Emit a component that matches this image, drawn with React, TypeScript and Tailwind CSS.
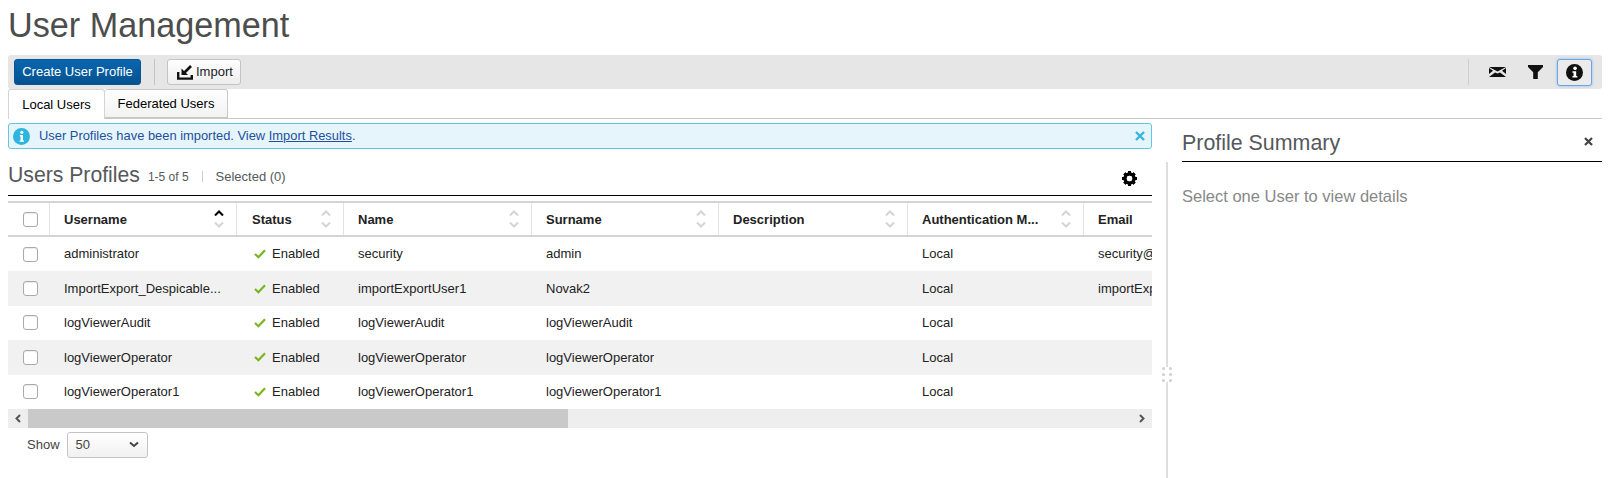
const columns = [
  { label: "Username", width: "w-[187px]", pad: "pl-[14px]", active: true },
  { label: "Status", width: "w-[107px]", pad: "pl-[15px]" },
  { label: "Name", width: "w-[188px]", pad: "pl-[14px]" },
  { label: "Surname", width: "w-[187px]", pad: "pl-[14px]" },
  { label: "Description", width: "w-[189px]", pad: "pl-[14px]" },
  { label: "Authentication M...", width: "w-[176px]", pad: "pl-[14px]" },
  { label: "Email", width: "w-[120px]", pad: "pl-[14px]", noSort: true },
];

const rows = [
  { username: "administrator", name: "security", surname: "admin", email: "security@" },
  { username: "ImportExport_Despicable...", name: "importExportUser1", surname: "Novak2", email: "importExport" },
  { username: "logViewerAudit", name: "logViewerAudit", surname: "logViewerAudit", email: "" },
  { username: "logViewerOperator", name: "logViewerOperator", surname: "logViewerOperator", email: "" },
  { username: "logViewerOperator1", name: "logViewerOperator1", surname: "logViewerOperator1", email: "" },
];

const gearTeeth = [0, 45, 90, 135];

const Checkbox = () => (
  <span className="block w-[15px] h-[15px] ml-[15px] rounded-[3px] border border-[#aaa] bg-white shadow-[inset_0_1px_1px_rgba(0,0,0,0.08)]"></span>
);

const Chevron = ({ up, className }: { up?: boolean; className: string }) => (
  <svg width="10" height="6" viewBox="0 0 10 6" className={className}>
    <path d={up ? "M1 5.5 L5 1.5 L9 5.5" : "M1 0.5 L5 4.5 L9 0.5"} fill="none" stroke="currentColor" strokeWidth="2" />
  </svg>
);

const SortIcon = ({ active }: { active?: boolean }) => (
  <span className="flex flex-col gap-[6px]">
    <Chevron up className={active ? "text-black" : "text-[#d4d4d4]"} />
    <Chevron className="text-[#d4d4d4]" />
  </span>
);

export default function App() {
  return (
    <div className="w-[1609px] h-[478px] overflow-hidden bg-white font-['Liberation_Sans',Arial,sans-serif] text-[13px] text-[#222]">
      <h1 className="h-[55px] pl-2 pt-[3px] text-[34.2px] leading-[44px] text-[#4d4d4d]">User Management</h1>

      <div className="mx-2 h-[34px] w-[1594px] flex items-center bg-[#e6e6e6] rounded-[3px] pl-[6px] pr-[10px]">
        <button className="w-[127px] h-[26px] rounded-[3px] border border-[#0a5493] bg-gradient-to-b from-[#0a66b1] to-[#04528f] text-white text-[13px]">Create User Profile</button>
        <span className="w-[1px] h-[26px] bg-[#c4c4c4] ml-[13px] mr-[12px]"></span>
        <button className="w-[74px] h-[26px] rounded-[3px] border border-[#c4c4c4] bg-gradient-to-b from-white to-[#ededed] flex items-center gap-[3px] pl-[9px] text-[13px]">
          <svg width="16" height="16" viewBox="0 0 16 16">
            <path d="M1.2 8 V14.6 H14.8 V11" fill="none" stroke="#111" strokeWidth="2.4" />
            <path d="M14 2 L7 9" fill="none" stroke="#111" strokeWidth="2.6" />
            <path d="M4.5 4.5 V11 H11 Z" fill="#111" />
          </svg>
          Import
        </button>
        <span className="ml-auto w-[1px] h-[26px] bg-[#cfcfcf] mr-[20px]"></span>
        <svg width="17" height="10" viewBox="0 0 17 10" className="mr-[22px]">
          <path d="M0 0 H17 L8.5 4.6 Z M0 10 L6 5.4 L8.5 6.4 L11 5.4 L17 10 Z M0 1 L4 3.8 L0 7 Z M17 1 L13 3.8 L17 7 Z" fill="#111" />
        </svg>
        <svg width="15" height="14" viewBox="0 0 15 14" className="mr-[14px]">
          <path d="M0 0 H15 V2 L9.8 7.2 V14 H5.2 V7.2 L0 2 Z" fill="#111" />
        </svg>
        <span className="w-[35px] h-[27px] rounded-[3px] border border-[#6ea3e6] shadow-[0_0_3px_#8ab8f0] bg-[#ebebeb] flex items-center justify-center">
          <svg width="17" height="17" viewBox="0 0 18 18">
            <circle cx="9" cy="9" r="9" fill="#111" />
            <circle cx="9.6" cy="4.6" r="1.9" fill="#fff" />
            <path d="M6.8 7.6 H10.8 V12.8 H12 V14.4 H6.8 V12.8 H8 V9.2 H6.8 Z" fill="#fff" />
          </svg>
        </span>
      </div>

      <div className="mx-2 w-[1594px] h-[30px] flex items-end border-b border-[#c8c8c8]">
        <span className="w-[97px] h-[30px] -mb-px rounded-t-[3px] border border-b-0 border-[#d4d4d4] bg-white flex items-center justify-center text-[13px] text-black">Local Users</span>
        <span className="w-[123px] h-[29px] rounded-t-[3px] border border-l-0 border-[#c8c8c8] bg-gradient-to-b from-white to-[#f2f2f2] flex items-center justify-center text-[13px] text-black">Federated Users</span>
      </div>

      <div className="flex">
        <div className="w-[1144px] ml-2 shrink-0">
          <div className="mt-[4px] h-[26px] rounded-[3px] border border-[#63c6e4] bg-[#e5f5fb] flex items-center pl-[4px] pr-[6px] text-[12.9px] text-[#1f4f9f]">
            <svg width="17" height="17" viewBox="0 0 17 17" className="mr-[9px]">
              <circle cx="8.5" cy="8.5" r="8.5" fill="#2db4e0" />
              <circle cx="8.8" cy="4.3" r="1.6" fill="#fff" />
              <path d="M6.8 7 H10 V12.4 H11 V13.8 H6.6 V12.4 H7.6 V8.4 H6.8 Z" fill="#fff" />
            </svg>
            <span>User Profiles have been imported. View <span className="underline">Import Results</span>.</span>
            <svg width="10" height="10" viewBox="0 0 10 10" className="ml-auto">
              <path d="M1 1 L9 9 M9 1 L1 9" stroke="#35b5de" strokeWidth="2.4" />
            </svg>
          </div>

          <div className="h-[47px] flex items-center border-b border-black mb-[5px] pt-[6px]">
            <span className="text-[21.2px] text-[#55585c]">Users Profiles</span>
            <span className="ml-2 mt-[3px] text-[12px] text-[#55585c]">1-5 of 5</span>
            <span className="ml-[13px] mr-[13px] mt-[3px] w-[1px] h-[11px] bg-[#ccc]"></span>
            <span className="mt-[3px] text-[13px] text-[#55585c]">Selected (0)</span>
            <svg width="15" height="15" viewBox="0 0 24 24" className="ml-auto mr-[15px] mt-[6px]">
              <circle cx="12" cy="12" r="7.4" fill="none" stroke="#000" strokeWidth="5" />
              {gearTeeth.map((angle) => (
                <rect key={angle} x="9.4" y="0" width="5.2" height="24" fill="#000" transform={`rotate(${angle} 12 12)`} mask="url(#gear-hole)" />
              ))}
              <mask id="gear-hole">
                <rect width="24" height="24" fill="#fff" />
                <circle cx="12" cy="12" r="5" fill="#000" />
              </mask>
            </svg>
          </div>

          <div className="overflow-hidden">
            <div className="flex w-[1280px] h-[36px] border-t-2 border-b-2 border-[#d4d4d4]">
              <div className="w-[42px] flex items-center border-r border-[#e3e3e3]">
                <Checkbox />
              </div>
              {columns.map((col) => (
                <div key={col.label} className={`${col.width} ${col.pad} flex items-center justify-between pr-[12px] border-r border-[#e3e3e3] font-bold text-[13px] text-[#222]`}>
                  <span className="mt-[1px]">{col.label}</span>
                  {!col.noSort && <SortIcon active={col.active} />}
                </div>
              ))}
            </div>
            {rows.map((row, i) => (
              <div key={row.username} className={`flex w-[1280px] h-[34.4px] items-center ${i % 2 === 1 ? "bg-[#f1f1f1]" : "bg-white"}`}>
                <div className="w-[42px]"><Checkbox /></div>
                <div className="w-[187px] pl-[14px]">{row.username}</div>
                <div className="w-[107px] pl-[17px] flex items-center gap-[6px]">
                  <svg width="12" height="10" viewBox="0 0 12 10">
                    <path d="M1 5 L4.4 8.2 L11 1.2" fill="none" stroke="#7ab51d" strokeWidth="2.2" />
                  </svg>
                  Enabled
                </div>
                <div className="w-[188px] pl-[14px]">{row.name}</div>
                <div className="w-[187px] pl-[14px]">{row.surname}</div>
                <div className="w-[189px]"></div>
                <div className="w-[176px] pl-[14px]">Local</div>
                <div className="w-[120px] pl-[14px] whitespace-nowrap">{row.email}</div>
              </div>
            ))}
          </div>

          <div className="h-[19px] bg-[#eeeeee] flex items-center justify-between">
            <div className="flex h-full items-center">
              <span className="w-[20px] flex justify-center">
                <svg width="6" height="9" viewBox="0 0 6 9"><path d="M5 1 L1.5 4.5 L5 8" fill="none" stroke="#555" strokeWidth="2" /></svg>
              </span>
              <span className="w-[540px] h-full bg-[#c9c9c9]"></span>
            </div>
            <span className="w-[20px] flex justify-center">
              <svg width="6" height="9" viewBox="0 0 6 9"><path d="M1 1 L4.5 4.5 L1 8" fill="none" stroke="#555" strokeWidth="2" /></svg>
            </span>
          </div>

          <div className="mt-[4px] pl-[19px] flex items-center gap-[7px] text-[13px] text-[#444]">
            <span>Show</span>
            <span className="w-[81px] h-[26px] rounded-[3px] border border-[#c4c4c4] bg-gradient-to-b from-white to-[#f1f1f1] flex items-center justify-between pl-[8px] pr-[8px]">
              50
              <svg width="10" height="7" viewBox="0 0 10 7"><path d="M1 1.5 L5 5 L9 1.5" fill="none" stroke="#444" strokeWidth="2" /></svg>
            </span>
          </div>
        </div>

        <div className="relative ml-[14px] mt-[43px] w-[2px] h-[316px] bg-[#dedede] shrink-0">
          <div className="absolute left-[-4px] top-[205px] w-[10px] h-[15px] bg-white grid grid-cols-2 gap-x-[3px] gap-y-[3px] justify-items-center">
            {[0, 1, 2, 3, 4, 5].map((dot) => (
              <span key={dot} className="w-[3px] h-[3px] rounded-full bg-[#cfcfcf]"></span>
            ))}
          </div>
        </div>

        <div className="ml-[14px] w-[420px]">
          <div className="h-[43px] flex items-center justify-between border-b border-black pt-[6px] pr-[9px]">
            <span className="text-[21.4px] text-[#55585c]">Profile Summary</span>
            <svg width="9" height="9" viewBox="0 0 9 9" className="mb-[4px]">
              <path d="M1 1 L8 8 M8 1 L1 8" stroke="#444" strokeWidth="2.2" />
            </svg>
          </div>
          <p className="mt-[24px] text-[16.5px] leading-[20px] text-[#888]">Select one User to view details</p>
        </div>
      </div>
    </div>
  );
}
